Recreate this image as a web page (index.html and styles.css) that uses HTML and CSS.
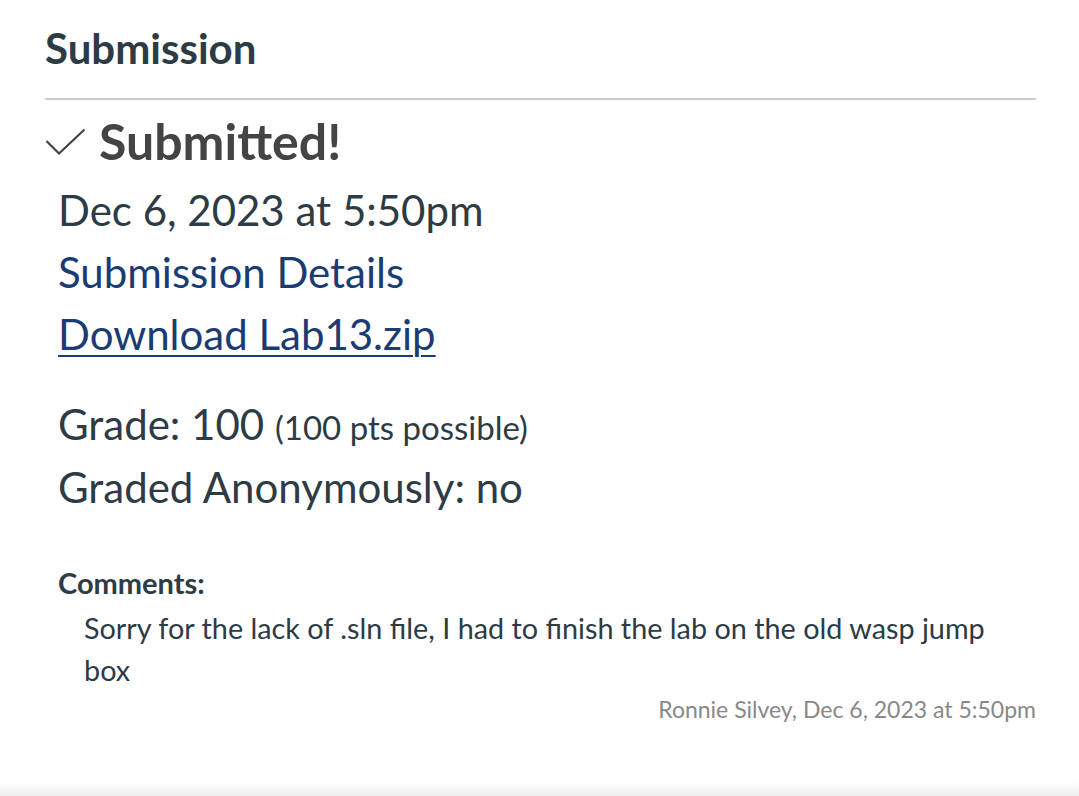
FILE: index.html
```html
<!DOCTYPE html>
<html>
<head>
<meta charset="utf-8">
<link rel="stylesheet" href="styles.css">
</head>
<body>
<div class="page">
  <section class="submission">
    <h2 class="title">Submission</h2>
    <div class="divider"></div>
    <div class="status">
      <svg class="check" width="42" height="30" viewBox="0 0 42 30"><path d="M1.5 13 L14 25.5 L39.5 1.5" fill="none" stroke="#444" stroke-width="2.2"/></svg>
      <span class="status-text">Submitted!</span>
    </div>
    <div class="details">
      <div class="line">Dec 6, 2023 at 5:50pm</div>
      <div class="line"><a class="link" href="#">Submission Details</a></div>
      <div class="line"><a class="link underline" href="#">Download Lab13.zip</a></div>
      <div class="grade">
        <div class="line">Grade: 100 <span class="small">(100 pts possible)</span></div>
        <div class="line">Graded Anonymously: no</div>
      </div>
      <div class="comments">
        <div class="comments-label">Comments:</div>
        <div class="comment">
          <div class="comment-text">Sorry for the lack of .sln file, I had to finish the lab on the old wasp jump box</div>
          <div class="comment-meta">Ronnie Silvey, Dec 6, 2023 at 5:50pm</div>
        </div>
      </div>
    </div>
  </section>
  <div class="footer-shade"></div>
</div>
</body>
</html>
```
FILE: styles.css
```css
html, body {
  margin: 0;
  padding: 0;
  background: #fff;
}
body {
  font-family: Lato, "Noto Sans", sans-serif;
  color: #2d3b45;
}
.page {
  width: 1079px;
  height: 796px;
  position: relative;
  overflow: hidden;
  display: flex;
  flex-direction: column;
}
.submission {
  flex: 1;
  padding: 23px 43px 0 45px;
}
.title {
  margin: 0;
  font-size: 42px;
  line-height: 50px;
  font-weight: 700;
  color: #2d3b45;
}
.divider {
  margin-top: 25px;
  height: 2px;
  background: #c7cdd1;
}
.status {
  margin-top: 11px;
  display: flex;
  align-items: center;
  gap: 12px;
  height: 60px;
}
.check {
  display: block;
  margin-top: 4px;
}
.status-text {
  font-size: 50px;
  line-height: 60px;
  font-weight: 700;
  color: #444;
}
.details {
  margin-top: 8px;
  padding-left: 13px;
}
.line {
  font-size: 42px;
  line-height: 62px;
  white-space: nowrap;
}
.link {
  color: #1b3c72;
  text-decoration: none;
}
.link.underline {
  text-decoration: underline;
  text-decoration-thickness: 2px;
  text-underline-offset: 5px;
}
.grade {
  margin-top: 29px;
}
.grade .line {
  line-height: 60px;
}
.small {
  font-size: 33px;
}
.comments {
  margin-top: 44px;
}
.comments-label {
  font-size: 29px;
  line-height: 44px;
  font-weight: 700;
}
.comment {
  padding-left: 26px;
}
.comment-text {
  margin-top: 2px;
  font-size: 28.8px;
  line-height: 42px;
  padding-right: 40px;
}
.comment-meta {
  text-align: right;
  font-size: 23px;
  line-height: 34px;
  color: #888;
  margin-top: 1px;
}
.footer-shade {
  height: 14px;
  background: linear-gradient(to bottom, #fff, #eeeeee);
}
```
